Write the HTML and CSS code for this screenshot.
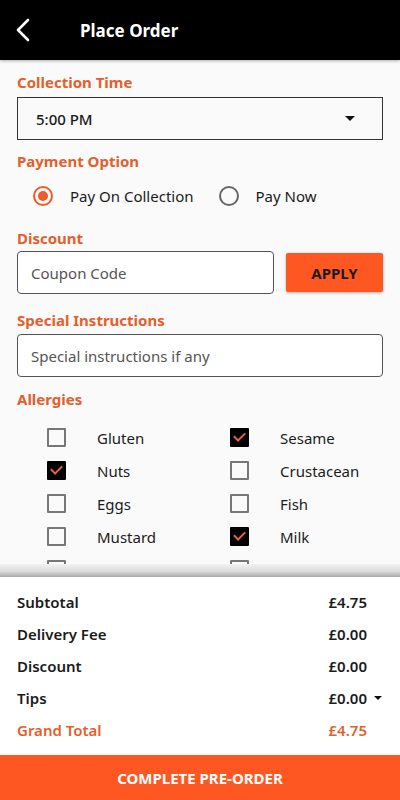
FILE: index.html
```html
<!DOCTYPE html>
<html>
<head>
    <title>Place Order</title>
    <link rel="stylesheet" href="styles.css">
</head>
<body>
    <div class="screen">
        <header class="topbar">
            <svg class="back" width="20" height="24" viewBox="0 0 20 24">
                <path d="M13 2 L3 12 L13 22" fill="none" stroke="#fff" stroke-width="2.6" stroke-linecap="round" stroke-linejoin="round"/>
            </svg>
            <h1>Place Order</h1>
        </header>

        <main class="content">
            <h3 class="label first">Collection Time</h3>
            <div class="select">
                <span>5:00 PM</span>
                <span class="caret"></span>
            </div>

            <h3 class="label">Payment Option</h3>
            <div class="radios">
                <div class="radio-item">
                    <span class="radio checked"></span>
                    <span>Pay On Collection</span>
                </div>
                <div class="radio-item">
                    <span class="radio"></span>
                    <span>Pay Now</span>
                </div>
            </div>

            <h3 class="label">Discount</h3>
            <div class="coupon-row">
                <div class="field coupon">Coupon Code</div>
                <button class="apply">APPLY</button>
            </div>

            <h3 class="label">Special Instructions</h3>
            <div class="field instructions">Special instructions if any</div>

            <h3 class="label">Allergies</h3>
            <div class="allergies">
                <div class="check-item"><span class="box"></span>Gluten</div>
                <div class="check-item"><span class="box checked"></span>Sesame</div>
                <div class="check-item"><span class="box checked"></span>Nuts</div>
                <div class="check-item"><span class="box"></span>Crustacean</div>
                <div class="check-item"><span class="box"></span>Eggs</div>
                <div class="check-item"><span class="box"></span>Fish</div>
                <div class="check-item"><span class="box"></span>Mustard</div>
                <div class="check-item"><span class="box checked"></span>Milk</div>
                <div class="check-item"><span class="box"></span></div>
                <div class="check-item"><span class="box"></span></div>
            </div>
        </main>

        <section class="summary">
            <div class="row"><span>Subtotal</span><span class="val">£4.75</span><span></span></div>
            <div class="row"><span>Delivery Fee</span><span class="val">£0.00</span><span></span></div>
            <div class="row"><span>Discount</span><span class="val">£0.00</span><span></span></div>
            <div class="row"><span>Tips</span><span class="val">£0.00</span><span class="caret small"></span></div>
            <div class="row total"><span>Grand Total</span><span class="val">£4.75</span><span></span></div>
        </section>

        <button class="complete">COMPLETE PRE-ORDER</button>
    </div>
</body>
</html>
```

FILE: styles.css
```css
body {
    margin: 0;
    font-family: "Noto Sans", sans-serif;
    color: #1b1b1b;
}
.screen {
    width: 400px;
    height: 800px;
    display: flex;
    flex-direction: column;
    background: #fafafa;
    overflow: hidden;
}
.topbar {
    height: 60px;
    flex-shrink: 0;
    background: #000;
    display: flex;
    align-items: center;
    padding-left: 15px;
    box-shadow: 0 1px 3px rgba(0, 0, 0, 0.3);
    position: relative;
    z-index: 2;
}
.back {
    display: block;
}
.topbar h1 {
    margin: 0 0 0 45px;
    color: #fff;
    font-size: 17px;
    font-weight: 700;
}
.content {
    flex: 1;
    overflow: hidden;
    padding: 0 17px;
}
.label {
    margin: 0;
    color: #e4602b;
    font-size: 15px;
    font-weight: 700;
    line-height: 20px;
}
.label.first {
    margin-top: 12px;
}
.select {
    margin-top: 5px;
    height: 43px;
    box-sizing: border-box;
    border: 1px solid #333;
    display: flex;
    align-items: center;
    justify-content: space-between;
    padding: 0 27px 0 18px;
    font-size: 15px;
    font-weight: 500;
}
.caret {
    width: 0;
    height: 0;
    border-left: 5px solid transparent;
    border-right: 5px solid transparent;
    border-top: 5px solid #111;
}
.caret.small {
    border-left-width: 4px;
    border-right-width: 4px;
    border-top-width: 4px;
    justify-self: end;
    margin-right: 1px;
}
.select + .label {
    margin-top: 11px;
}
.radios {
    margin-top: 10px;
    height: 30px;
    display: flex;
    align-items: center;
    gap: 25px;
    padding-left: 16px;
    font-size: 15px;
}
.radio-item {
    display: flex;
    align-items: center;
    gap: 17px;
}
.radio {
    width: 20px;
    height: 20px;
    box-sizing: border-box;
    border: 2px solid #666;
    border-radius: 50%;
    display: flex;
    align-items: center;
    justify-content: center;
}
.radio.checked {
    border-color: #ee5b2a;
}
.radio.checked::after {
    content: "";
    width: 10px;
    height: 10px;
    border-radius: 50%;
    background: #ee5b2a;
}
.radios + .label {
    margin-top: 17px;
}
.coupon-row {
    margin-top: 3px;
    display: flex;
    align-items: center;
    gap: 12px;
}
.field {
    height: 43px;
    box-sizing: border-box;
    border: 1px solid #555;
    border-radius: 4px;
    background: #fff;
    display: flex;
    align-items: center;
    padding-left: 13px;
    color: #555;
    font-size: 15px;
}
.coupon {
    flex: 1;
}
.apply {
    width: 97px;
    height: 39px;
    border: none;
    border-radius: 2px;
    background: #ff5722;
    color: #1b1b1b;
    font-family: inherit;
    font-size: 15px;
    font-weight: 700;
    box-shadow: 0 1px 3px rgba(0, 0, 0, 0.3);
}
.coupon-row + .label {
    margin-top: 16px;
}
.instructions {
    margin-top: 4px;
}
.instructions + .label {
    margin-top: 12px;
}
.allergies {
    margin-top: 12px;
    padding-left: 30px;
    display: grid;
    grid-template-columns: 183px 1fr;
    grid-auto-rows: 33px;
    font-size: 15px;
}
.check-item {
    display: flex;
    align-items: center;
    gap: 31px;
}
.box {
    width: 19px;
    height: 19px;
    box-sizing: border-box;
    border: 2px solid #777;
    border-radius: 1px;
    display: flex;
    align-items: center;
    justify-content: center;
}
.box.checked {
    background: #000;
    border-color: #000;
}
.box.checked::after {
    content: "";
    width: 9px;
    height: 5px;
    border-left: 2px solid #e8653a;
    border-bottom: 2px solid #e8653a;
    transform: translateY(-2px) rotate(-45deg);
}
.summary {
    flex-shrink: 0;
    position: relative;
    z-index: 1;
    background: #fff;
    padding: 9px 17px 9px 17px;
}
.summary::before {
    content: "";
    position: absolute;
    left: 0;
    right: 0;
    top: -13px;
    height: 13px;
    background: linear-gradient(#f2f2f2, #dcdcdc 55%, #a9a9a9);
}
.row {
    display: grid;
    grid-template-columns: 1fr auto 16px;
    align-items: center;
    height: 32px;
    font-size: 15px;
    font-weight: 600;
}
.row.total {
    color: #e4602b;
}
.complete {
    flex-shrink: 0;
    height: 45px;
    border: none;
    background: #ff5722;
    color: #fff;
    font-family: inherit;
    font-size: 15px;
    font-weight: 700;
}
```
